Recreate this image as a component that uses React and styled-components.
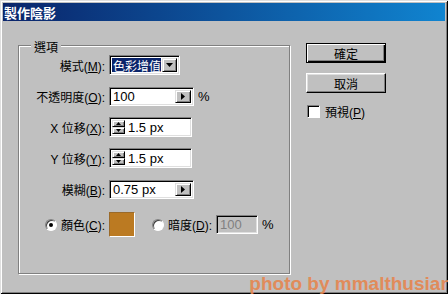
import React from 'react'
import styled, { createGlobalStyle } from 'styled-components'

const FONT = `"Liberation Sans", "Noto Sans CJK TC", sans-serif`

const GlobalStyle = createGlobalStyle`
  html, body {
    margin: 0;
    padding: 0;
    background: #c0c0c0;
  }
  body {
    width: 448px;
    height: 294px;
    overflow: hidden;
  }
`

const Window = styled.div`
  position: relative;
  width: 448px;
  height: 294px;
  box-sizing: border-box;
  padding: 3px;
  background: #c0c0c0;
  box-shadow: inset 1px 1px #dfdfdf, inset -1px -1px #000,
    inset 2px 2px #fff, inset -2px -2px #808080;
  font-family: ${FONT};
  font-size: 12px;
  color: #000;
  overflow: hidden;
`

const TitleBar = styled.div`
  height: 18px;
  display: flex;
  align-items: center;
  padding-left: 1px;
  background: linear-gradient(90deg, #0a246a, #1084d0);
  color: #fff;
  font-size: 13px;
  font-weight: bold;
`

const Body = styled.div`
  display: flex;
  padding: 22px 0 0 15px;
`

const Group = styled.div`
  position: relative;
  margin-top: 2px;
  width: 272px;
  height: 229px;
  box-sizing: border-box;
  border: 1px solid #808080;
  box-shadow: inset 1px 1px #fff, 1px 1px #fff;
  padding-top: 9px;
  display: flex;
  flex-direction: column;
  gap: 11px;
`

const Legend = styled.span`
  position: absolute;
  top: -8px;
  left: 12px;
  padding: 0 3px;
  background: #c0c0c0;
  font-size: 12px;
`

const Row = styled.div`
  display: grid;
  grid-template-columns: 86px auto;
  column-gap: 4px;
  align-items: center;
  height: ${p => p.$h || 20}px;
  margin-top: ${p => p.$mt || 0}px;
`

const Label = styled.div`
  display: flex;
  justify-content: flex-end;
  align-items: center;
  gap: 4px;
  white-space: nowrap;
`

const Key = styled.span`
  text-decoration: underline;
`

const Controls = styled.div`
  display: flex;
  align-items: center;
  gap: 4px;
`

const Sunken = styled.div`
  display: flex;
  align-items: stretch;
  box-sizing: border-box;
  width: ${p => p.$w}px;
  height: ${p => p.$h || 19}px;
  border: 1px solid;
  border-color: #808080 #fff #fff #808080;
  box-shadow: inset 1px 1px #000, inset -1px -1px #dfdfdf;
  background: ${p => (p.$disabled ? '#c0c0c0' : '#fff')};
  padding: 2px;
`

const Value = styled.div`
  flex: 1;
  display: flex;
  align-items: center;
  padding-left: 1px;
  font-size: 13px;
  white-space: nowrap;
  color: ${p => (p.$disabled ? '#808080' : '#000')};
`

const Selected = styled.div`
  flex: 1;
  display: flex;
  align-items: center;
  padding-left: 1px;
  background: #0a246a;
  color: #fff;
  font-size: 12px;
  white-space: nowrap;
  overflow: hidden;
  margin-right: 1px;
`

const SmallButton = styled.div`
  width: ${p => p.$w || 15}px;
  flex-shrink: 0;
  display: flex;
  align-items: center;
  justify-content: center;
  box-sizing: border-box;
  background: #c0c0c0;
  border: 1px solid;
  border-color: #dfdfdf #000 #000 #dfdfdf;
  box-shadow: inset 1px 1px #fff, inset -1px -1px #808080;
`

const Spin = styled.div`
  display: flex;
  flex-direction: column;
  width: 13px;
  margin-right: 2px;
  ${SmallButton} {
    width: 13px;
    flex: 1;
  }
`

const Percent = styled.span`
  font-size: 13px;
`

const Radio = styled.span`
  width: 12px;
  height: 12px;
  box-sizing: border-box;
  border-radius: 50%;
  background: #fff;
  border: 1px solid;
  border-color: #808080 #fff #fff #808080;
  box-shadow: inset 1px 1px #404040;
  display: flex;
  align-items: center;
  justify-content: center;
  &::after {
    content: '';
    width: 4px;
    height: 4px;
    border-radius: 50%;
    background: ${p => (p.$checked ? '#000' : 'transparent')};
  }
`

const Swatch = styled.div`
  width: 26px;
  height: 25px;
  box-sizing: border-box;
  background: #bb7a22;
  border: 1px solid;
  border-color: #9a6a2a #fff #fff #9a6a2a;
`

const Shade = styled.div`
  display: flex;
  align-items: center;
  gap: 4px;
  margin-left: 13px;
`

const Side = styled.div`
  margin-left: 16px;
  display: flex;
  flex-direction: column;
  gap: 10px;
`

const Button = styled.div`
  width: 80px;
  height: 20px;
  box-sizing: border-box;
  display: flex;
  align-items: center;
  justify-content: center;
  background: #c0c0c0;
  border: 1px solid;
  border-color: ${p => (p.$default ? '#000' : '#fff #000 #000 #fff')};
  box-shadow: ${p =>
    p.$default
      ? 'inset 1px 1px #fff, inset -1px -1px #000, inset -2px -2px #808080'
      : 'inset -1px -1px #808080, inset 1px 1px #dfdfdf'};
  font-size: 12px;
`

const Check = styled.label`
  display: flex;
  align-items: center;
  gap: 5px;
  margin-left: 1px;
  font-size: 12px;
`

const Box = styled.span`
  width: 13px;
  height: 13px;
  box-sizing: border-box;
  background: #fff;
  border: 1px solid;
  border-color: #808080 #fff #fff #808080;
  box-shadow: inset 1px 1px #000;
`

const Watermark = styled.div`
  position: absolute;
  right: -4px;
  top: 274px;
  font-family: "Liberation Sans", sans-serif;
  font-weight: bold;
  font-size: 19px;
  line-height: 20px;
  color: #e58650;
  opacity: 0.9;
  white-space: nowrap;
`

const TriRight = () => (
  <svg width="4" height="7" viewBox="0 0 4 7">
    <path d="M0 0 L4 3.5 L0 7 Z" fill="#000" />
  </svg>
)

const TriDown = () => (
  <svg width="7" height="4" viewBox="0 0 7 4">
    <path d="M0 0 L7 0 L3.5 4 Z" fill="#000" />
  </svg>
)

const TriUp = () => (
  <svg width="5" height="3" viewBox="0 0 5 3">
    <path d="M0 3 L5 3 L2.5 0 Z" fill="#000" />
  </svg>
)

const TriDownSmall = () => (
  <svg width="5" height="3" viewBox="0 0 5 3">
    <path d="M0 0 L5 0 L2.5 3 Z" fill="#000" />
  </svg>
)

const SpinField = ({ value }) => (
  <Sunken $w={83} $h={20}>
    <Spin>
      <SmallButton><TriUp /></SmallButton>
      <SmallButton><TriDownSmall /></SmallButton>
    </Spin>
    <Value>{value}</Value>
  </Sunken>
)

const ArrowField = ({ value }) => (
  <Sunken $w={85}>
    <Value>{value}</Value>
    <SmallButton $w={16}><TriRight /></SmallButton>
  </Sunken>
)

export default function App() {
  return (
    <>
      <GlobalStyle />
      <Window>
        <TitleBar>製作陰影</TitleBar>
        <Body>
          <Group>
            <Legend>選項</Legend>

            <Row>
              <Label><span>模式(<Key>M</Key>):</span></Label>
              <Controls>
                <Sunken $w={71} $h={20}>
                  <Selected>色彩增值</Selected>
                  <SmallButton $w={15}><TriDown /></SmallButton>
                </Sunken>
              </Controls>
            </Row>

            <Row>
              <Label><span>不透明度(<Key>O</Key>):</span></Label>
              <Controls>
                <ArrowField value="100" />
                <Percent>%</Percent>
              </Controls>
            </Row>

            <Row>
              <Label><span>X 位移(<Key>X</Key>):</span></Label>
              <Controls>
                <SpinField value="1.5 px" />
              </Controls>
            </Row>

            <Row>
              <Label><span>Y 位移(<Key>Y</Key>):</span></Label>
              <Controls>
                <SpinField value="1.5 px" />
              </Controls>
            </Row>

            <Row>
              <Label><span>模糊(<Key>B</Key>):</span></Label>
              <Controls>
                <ArrowField value="0.75 px" />
              </Controls>
            </Row>

            <Row $h={25} $mt={2}>
              <Label>
                <Radio $checked />
                <span>顏色(<Key>C</Key>):</span>
              </Label>
              <Controls>
                <Swatch />
                <Shade>
                  <Radio />
                  <span>暗度(<Key>D</Key>):</span>
                  <Sunken $w={42} $disabled>
                    <Value $disabled>100</Value>
                  </Sunken>
                  <Percent>%</Percent>
                </Shade>
              </Controls>
            </Row>
          </Group>

          <Side>
            <Button $default>確定</Button>
            <Button>取消</Button>
            <Check>
              <Box />
              <span>預視(<Key>P</Key>)</span>
            </Check>
          </Side>
        </Body>
        <Watermark>photo by mmalthusian</Watermark>
      </Window>
    </>
  )
}
